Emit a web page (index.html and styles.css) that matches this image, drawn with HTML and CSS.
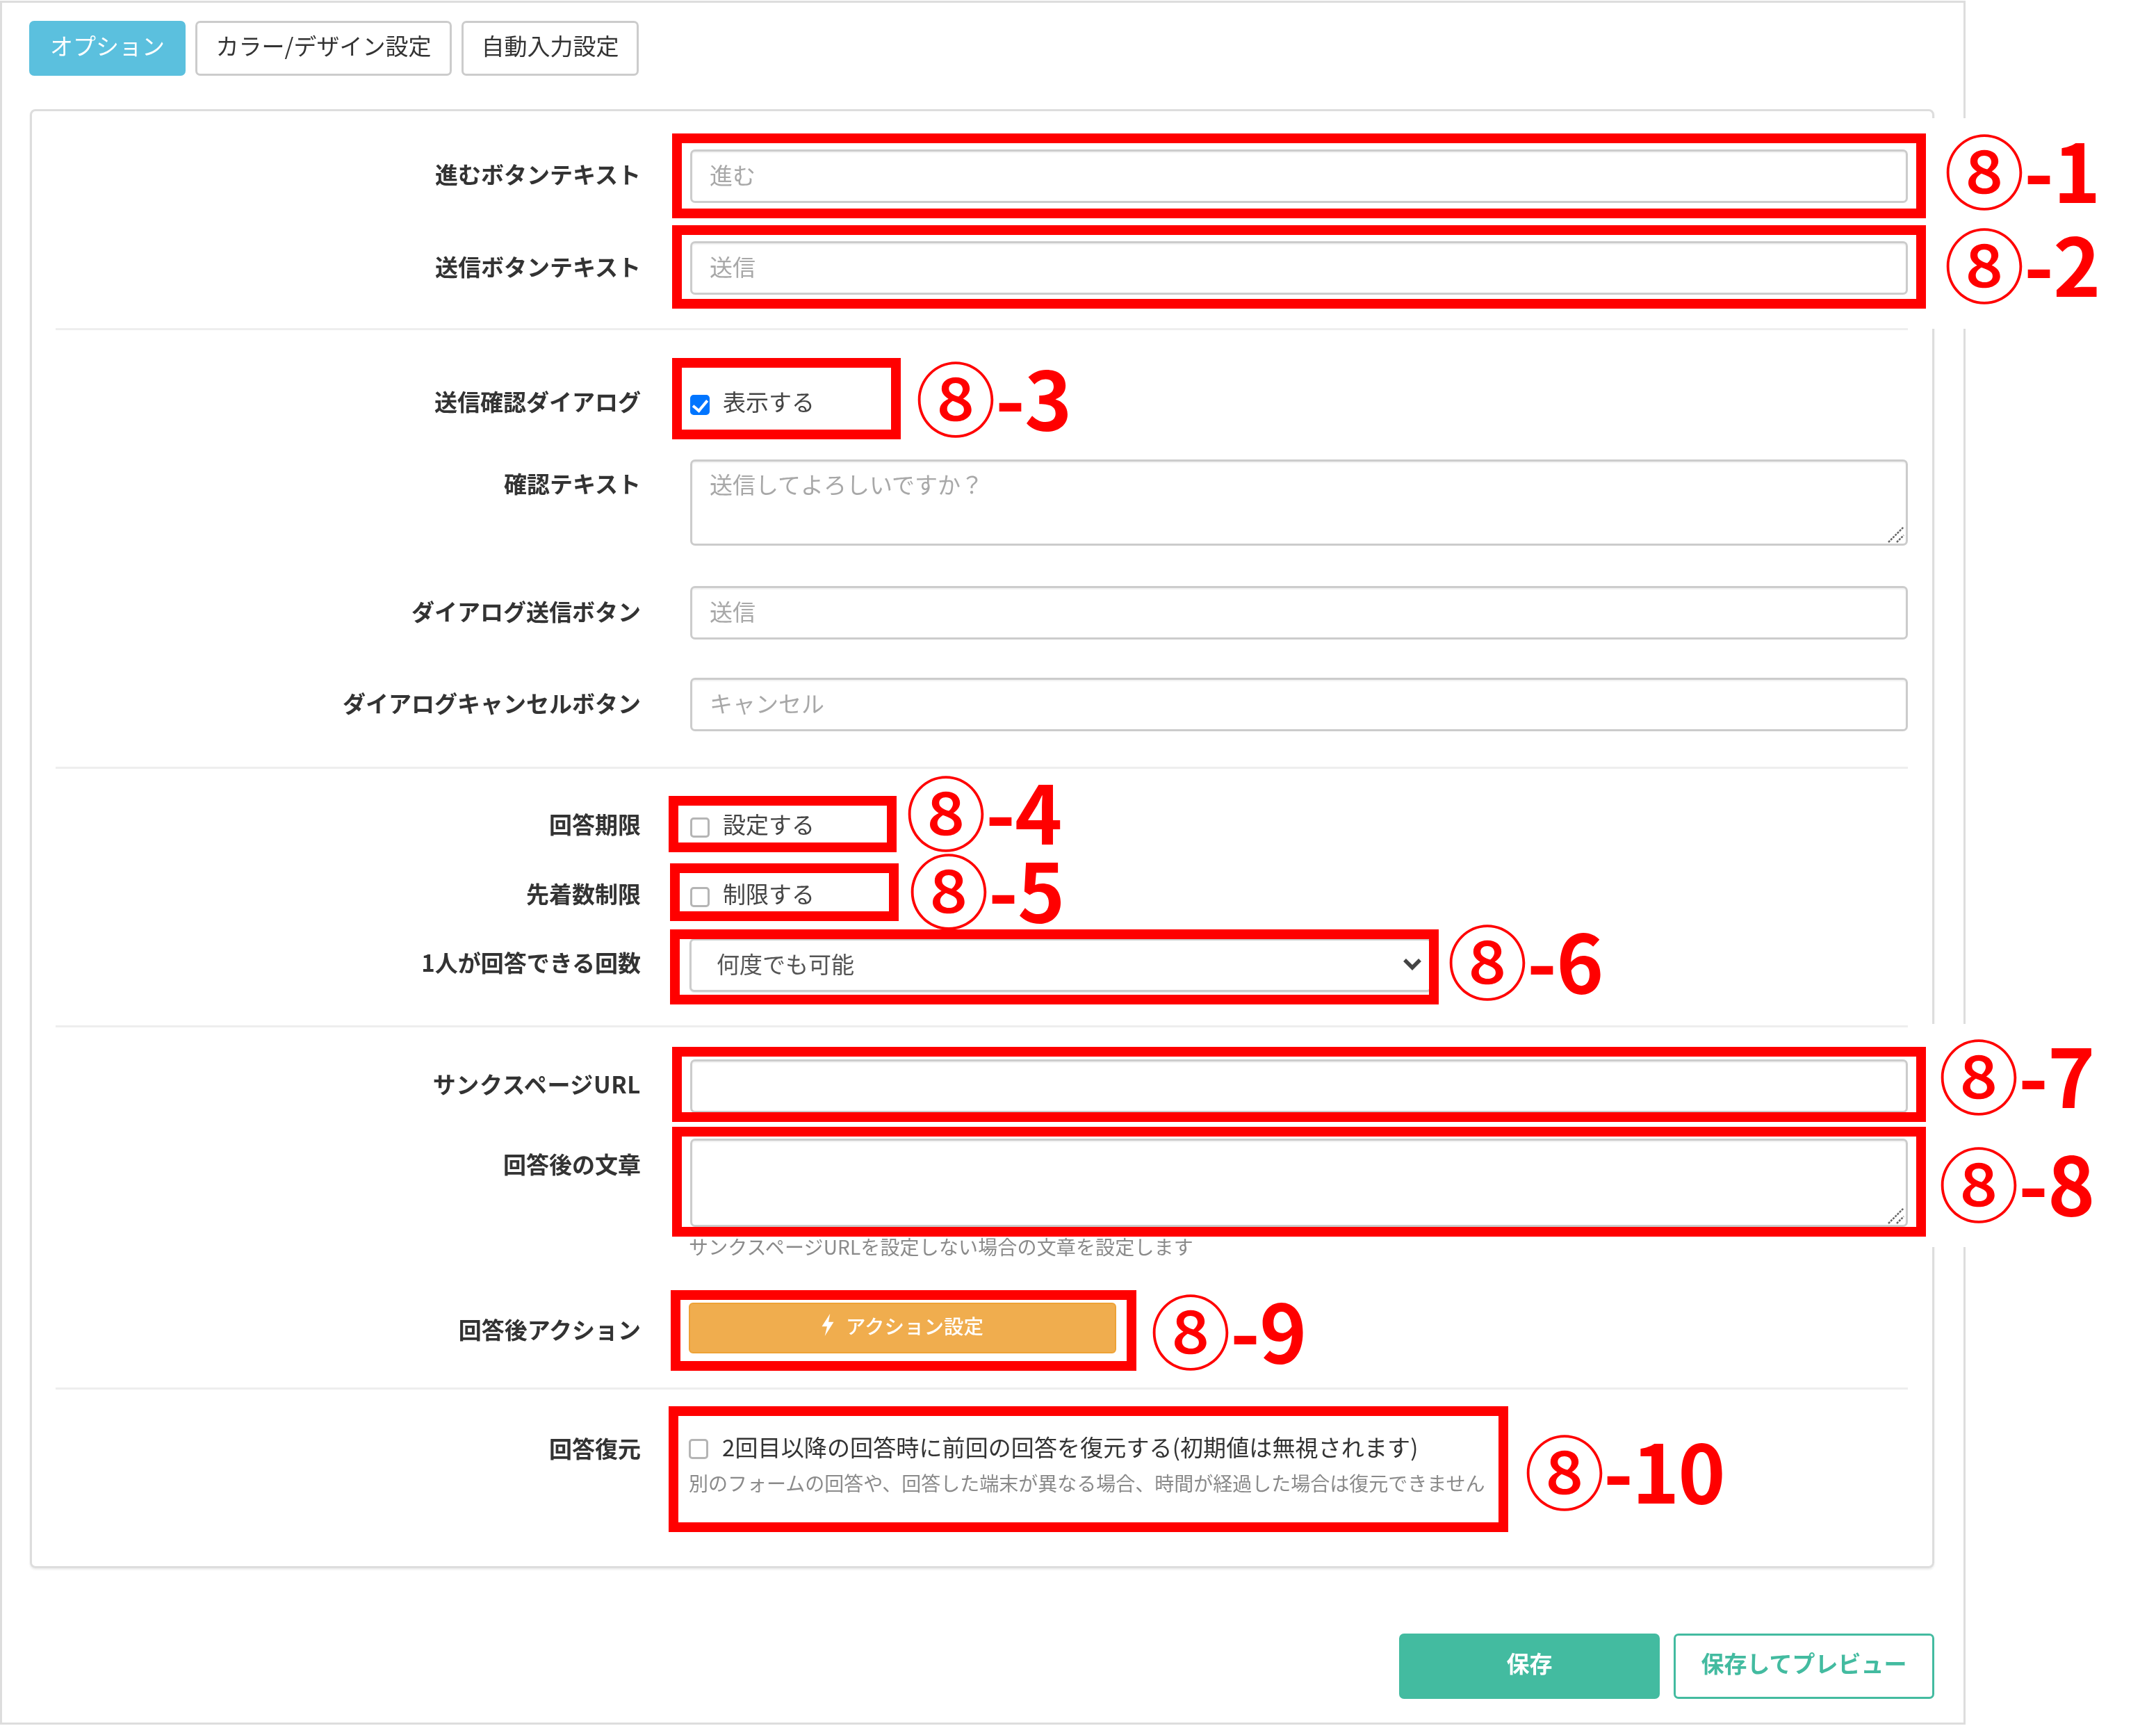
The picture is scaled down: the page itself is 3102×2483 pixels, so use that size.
FILE: index.html
```html
<!DOCTYPE html>
<html lang="ja">
<head>
<meta charset="utf-8">
<title>オプション</title>
<link rel="stylesheet" href="styles.css">
</head>
<body>
<div class="stage">
  <main class="panel">
    <nav class="tabs">
      <a class="tab tab-active tab-a">オプション</a>
      <a class="tab tab-b">カラー/デザイン設定</a>
      <a class="tab tab-c">自動入力設定</a>
    </nav>
    <form class="card">
      <div class="row r1"><label class="label">進むボタンテキスト</label><input class="field" placeholder="進む"></div>
      <div class="row r2"><label class="label">送信ボタンテキスト</label><input class="field" placeholder="送信"></div>
      <hr class="rule h1">
      <div class="row r3"><label class="label">送信確認ダイアログ</label><div class="check"><input type="checkbox" class="box" checked><span class="check-text">表示する</span></div></div>
      <div class="row row-top r4"><label class="label">確認テキスト</label><div class="area-wrap"><textarea class="field area area-small" placeholder="送信してよろしいですか？"></textarea><svg class="grip" viewBox="0 0 24 24"><path d="M1 23 23 1M13 23 23 13" /></svg></div></div>
      <div class="row r5"><label class="label">ダイアログ送信ボタン</label><input class="field" placeholder="送信"></div>
      <div class="row r6"><label class="label">ダイアログキャンセルボタン</label><input class="field" placeholder="キャンセル"></div>
      <hr class="rule h2">
      <div class="row r7"><label class="label">回答期限</label><div class="check"><input type="checkbox" class="box"><span class="check-text">設定する</span></div></div>
      <div class="row r8"><label class="label">先着数制限</label><div class="check"><input type="checkbox" class="box"><span class="check-text">制限する</span></div></div>
      <div class="row r9"><label class="label">1人が回答できる回数</label><div class="select-wrap"><select class="select"><option>何度でも可能</option></select><svg class="chevron" viewBox="0 0 28 18"><path d="M3 3 14 14 25 3"/></svg></div></div>
      <hr class="rule h3">
      <div class="row r10"><label class="label label-url">サンクスページURL</label><input class="field"></div>
      <div class="row row-top r11"><label class="label">回答後の文章</label><div><div class="area-wrap"><textarea class="field area area-large"></textarea><svg class="grip" viewBox="0 0 24 24"><path d="M1 23 23 1M13 23 23 13" /></svg></div><p class="help">サンクスページURLを設定しない場合の文章を設定します</p></div></div>
      <div class="row r12"><label class="label">回答後アクション</label><button type="button" class="action"><svg class="bolt" viewBox="0 0 16 30"><path d="M11 0 0 17H7L4 30 16 11H9Z"/></svg><span>アクション設定</span></button></div>
      <hr class="rule h4">
      <div class="row row-top r13"><label class="label">回答復元</label><div class="restore"><div class="check"><input type="checkbox" class="box"><span class="wide">2回目以降の回答時に前回の回答を復元する(初期値は無視されます)</span></div><p class="hint">別のフォームの回答や、回答した端末が異なる場合、時間が経過した場合は復元できません</p></div></div>
    </form>
    <footer class="actions">
      <button type="button" class="btn btn-save">保存</button>
      <button type="button" class="btn btn-preview">保存してプレビュー</button>
    </footer>
  </main>

  <div class="patch patch-a"></div>
  <div class="patch patch-b"></div>

  <div class="mark m1"></div>
  <div class="mark m2"></div>
  <div class="mark m3"></div>
  <div class="mark m4"></div>
  <div class="mark m5"></div>
  <div class="mark m6"></div>
  <div class="mark m7"></div>
  <div class="mark m8"></div>
  <div class="mark m9"></div>
  <div class="mark m10"></div>

  <div class="tag t1"><span class="num">⑧</span>-1</div>
  <div class="tag t2"><span class="num">⑧</span>-2</div>
  <div class="tag t3"><span class="num">⑧</span>-3</div>
  <div class="tag t4"><span class="num">⑧</span>-4</div>
  <div class="tag t5"><span class="num">⑧</span>-5</div>
  <div class="tag t6"><span class="num">⑧</span>-6</div>
  <div class="tag t7"><span class="num">⑧</span>-7</div>
  <div class="tag t8"><span class="num">⑧</span>-8</div>
  <div class="tag t9"><span class="num">⑧</span>-9</div>
  <div class="tag t10"><span class="num">⑧</span>-10</div>
</div>
</body>
</html>
```
FILE: styles.css
```css
* { box-sizing: border-box; }
html, body { margin: 0; background: #fff; }
body { font-family: "Noto Sans CJK JP", "Noto Sans", sans-serif; font-size: 33px; color: #333; }
.stage { position: relative; width: 3102px; height: 2483px; overflow: hidden; }

.panel { position: absolute; left: 0; top: 1px; width: 2828px; height: 2480px; border: 3px solid #ddd; padding: 26px 42px 33px 39px; filter: blur(.7px); }

.tabs { display: flex; gap: 14px; height: 79px; }
.tab { display: flex; align-items: center; justify-content: center; height: 79px; border: 3px solid #ccc; border-radius: 7px; color: #333; background: #fff; padding-bottom: 9px; }
.tab-a { width: 225px; }
.tab-b { width: 369px; }
.tab-c { width: 255px; }
.tab-active { background: #5bc0de; border-color: #5bc0de; color: #fff; }

.card { margin: 48px 0 0 1px; width: 2740px; height: 2099px; border: 3px solid #ddd; border-radius: 8px; padding: 55px 35px 0 34px; box-shadow: 0 2px 3px rgba(0,0,0,.08); }

.row { display: grid; grid-template-columns: 842px 1752px; column-gap: 71px; align-items: center; }
.row-top { align-items: start; }
.label { text-align: right; font-weight: 700; line-height: 48px; padding-bottom: 5px; color: #333; }
.label-url { letter-spacing: .6px; }
.r1 .label { padding-bottom: 8px; }
.r9 .label { padding-bottom: 9px; }
.r10 .label { padding-bottom: 7px; }
.r12 .label { padding: 3px 0 0; }
.row-top .label { padding: 10px 0 0; }
.r11 .label { padding: 12px 0 0; }
.r13 .label { padding: 0; }

.r2 { margin-top: 55px; }
.r3 { margin-top: 78px; height: 40px; }
.r4 { margin-top: 68px; }
.r5 { margin-top: 58px; }
.r6 { margin-top: 55px; }
.r7 { margin-top: 55px; height: 40px; }
.r8 { margin-top: 60px; height: 40px; }
.r9 { margin-top: 49px; }
.r10 { margin-top: 46px; }
.r11 { margin-top: 37px; }
.r12 { margin-top: 61px; }
.r13 { margin-top: 60px; }

.rule { border: 0; height: 3px; background: #eee; margin: 0; }
.h1 { margin-top: 48px; }
.h2 { margin-top: 51px; }
.h3 { margin-top: 48px; }
.h4 { margin-top: 49px; }

.field { display: block; width: 1752px; height: 77px; border: 3px solid #ccc; border-radius: 7px; padding: 0 25px 6px; font: 400 33px "Noto Sans CJK JP", sans-serif; color: #555; background: #fff; outline: 0; box-shadow: inset 0 2px 2px rgba(0,0,0,.06); }
.field::placeholder { color: #a8a8a8; opacity: 1; }
.area-wrap { position: relative; }
.area { resize: none; padding: 8px 25px; line-height: 48px; }
.area-small { height: 124px; }
.area-large { height: 127px; }
.grip { position: absolute; right: 5px; bottom: 4px; width: 24px; height: 24px; fill: none; stroke: #666; stroke-width: 2.5; stroke-dasharray: 3 1.5; }

.check { display: flex; align-items: center; gap: 19px; line-height: 40px; color: #444; }
.check-text { margin-bottom: 5px; }
.box { appearance: none; width: 28px; height: 29px; margin: 6px 0 0; flex: none; border: 3px solid #b5b5b5; border-radius: 5px; background: #fff; }
.box:checked { background: #0075ff; border-color: #0075ff; }
.box:checked::after { content: ""; display: block; width: 9px; height: 17px; margin: 0 auto; border: solid #fff; border-width: 0 4px 4px 0; transform: rotate(40deg); }
.wide { letter-spacing: .12px; color: #333; margin: 0 0 1px 1px; }

.select-wrap { position: relative; width: 1068px; margin-left: -1px; }
.select { display: block; width: 100%; height: 77px; appearance: none; border: 3px solid #ccc; border-radius: 7px; padding: 0 36px 6px; background: #fff; color: #555; font: 400 33px "Noto Sans CJK JP", sans-serif; box-shadow: 0 1px 2px rgba(0,0,0,.1); }
.chevron { position: absolute; right: 14px; top: 28px; width: 28px; height: 18px; fill: none; stroke: #444; stroke-width: 5.5; }

.help { margin: 8px 0 0 -2px; font-size: 28px; line-height: 40px; letter-spacing: .15px; color: #8a8a8a; white-space: nowrap; }

.action { display: flex; align-items: center; justify-content: center; gap: 17px; width: 615px; height: 73px; margin-left: -2px; border: 2px solid #eea236; border-radius: 6px; background: #f0ad4e; color: #fff; font: 500 28.5px "Noto Sans CJK JP", sans-serif; padding: 0 0 9px; }
.bolt { width: 18px; height: 32px; fill: #fff; }

.restore { margin-left: -2px; padding-top: 2px; }
.hint { margin: 11px 0 0; font-size: 28px; line-height: 40px; color: #8a8a8a; white-space: nowrap; }

.actions { display: flex; justify-content: flex-end; gap: 20px; margin-top: 94px; width: 2741px; }
.btn { width: 375px; height: 94px; border-radius: 7px; border: 3px solid #43bba0; font: 700 33px "Noto Sans CJK JP", sans-serif; padding: 0 0 10px; }
.btn-save { background: #43bba0; color: #fff; }
.btn-preview { background: #fff; color: #43bba0; }

/* overlay annotations drawn over the screenshot */
.patch { position: absolute; left: 2775px; width: 60px; background: #fff; }
.patch-a { top: 170px; height: 303px; }
.patch-b { top: 1473px; height: 321px; }

.mark { position: absolute; border: 14px solid #f00; }
.m1 { left: 967px; top: 192px; width: 1804px; height: 122px; }
.m2 { left: 967px; top: 324px; width: 1804px; height: 120px; }
.m3 { left: 967px; top: 515px; width: 329px; height: 117px; }
.m4 { left: 962px; top: 1145px; width: 328px; height: 81px; }
.m5 { left: 964px; top: 1242px; width: 329px; height: 83px; }
.m6 { left: 964px; top: 1337px; width: 1106px; height: 108px; }
.m7 { left: 967px; top: 1506px; width: 1804px; height: 108px; }
.m8 { left: 967px; top: 1621px; width: 1804px; height: 158px; }
.m9 { left: 965px; top: 1856px; width: 670px; height: 116px; }
.m10 { left: 962px; top: 2023px; width: 1208px; height: 181px; }

.tag { position: absolute; font: 700 116px/116px "Noto Sans CJK JP", sans-serif; color: #f00; white-space: nowrap; letter-spacing: -1px; }
.num { font-weight: 500; }
.t1 { left: 2797px; top: 183px; }
.t2 { left: 2797px; top: 318px; }
.t3 { left: 1317px; top: 510px; }
.t4 { left: 1303px; top: 1106px; }
.t5 { left: 1307px; top: 1218px; }
.t6 { left: 2082px; top: 1320px; }
.t7 { left: 2789px; top: 1485px; }
.t8 { left: 2789px; top: 1640px; }
.t9 { left: 1655px; top: 1852px; }
.t10 { left: 2193px; top: 2054px; letter-spacing: -2px; }
```
